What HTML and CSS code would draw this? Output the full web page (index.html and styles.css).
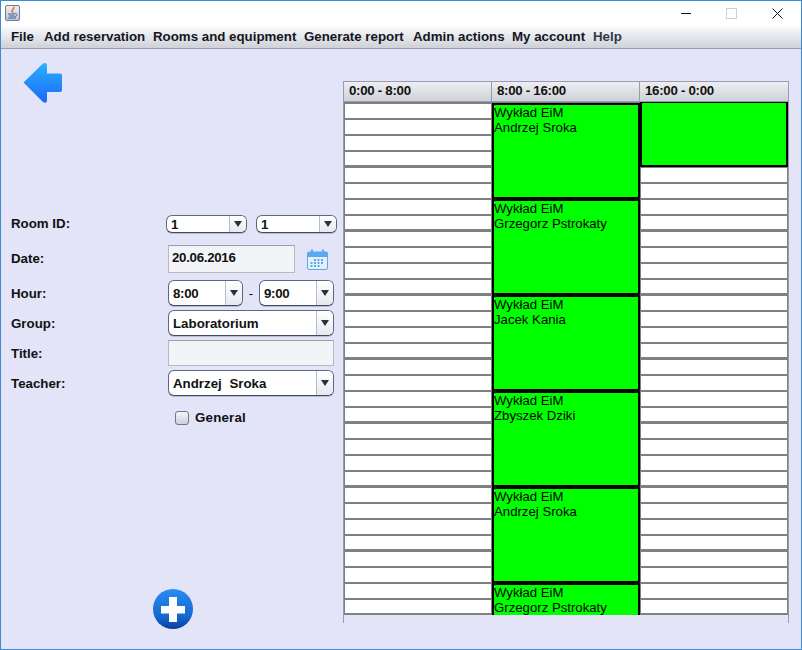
FILE: index.html
```html
<!DOCTYPE html>
<html lang="en">
<head>
    <meta charset="UTF-8">
    <title>Add reservation</title>
    <link rel="stylesheet" href="styles.css">
</head>
<body>

<div class="window">
    <header class="titlebar">
        <svg class="app-icon" width="15" height="16" viewBox="0 0 15 16">
            <defs>
                <linearGradient id="iconBg" x1="0" y1="0" x2="0" y2="1">
                    <stop offset="0" stop-color="#eef1f6"/>
                    <stop offset="1" stop-color="#b9c4d6"/>
                </linearGradient>
            </defs>
            <rect x="0.500" y="0.500" width="14" height="15" rx="1.500" fill="url(#iconBg)" stroke="#6f7c92"/>
            <path d="M9 1.500C10.500 4 6.500 4.500 8 8C4.500 6 8 4.500 9 1.500Z" fill="#e8651c" stroke="#e8651c" stroke-width="0.500"/>
            <path d="M3 9H10M4 11H9.500M3 13H11" stroke="#3f668f" stroke-width="1.200" fill="none"/>
            <path d="M10 8.500C13 8.500 12.500 11.500 9.500 11.500" stroke="#3f668f" stroke-width="0.900" fill="none"/>
        </svg>
        <div class="win-controls">
            <svg width="10" height="11" viewBox="0 0 10 11"><path d="M0 5.500H10" stroke="#111" stroke-width="1"/></svg>
            <svg width="11" height="11" viewBox="0 0 11 11"><rect x="0.500" y="0.500" width="10" height="10" fill="none" stroke="#cfcfcf"/></svg>
            <svg width="11" height="11" viewBox="0 0 11 11"><path d="M0.500 0.500L10.500 10.500M10.500 0.500L0.500 10.500" stroke="#111" stroke-width="1"/></svg>
        </div>
    </header>

    <nav class="menubar">
        <span>File</span>
        <span>Add reservation</span>
        <span>Rooms and equipment</span>
        <span>Generate report</span>
        <span>Admin actions</span>
        <span>My account</span>
        <span class="muted">Help</span>
    </nav>

    <main class="content">
        <section class="side">
            <svg class="back-icon" width="40" height="42" viewBox="0 0 40 42">
                <defs>
                    <linearGradient id="backFill" x1="0" y1="0" x2="0" y2="1">
                        <stop offset="0" stop-color="#2bb0ff"/>
                        <stop offset="1" stop-color="#1a68f5"/>
                    </linearGradient>
                </defs>
                <path d="M0.500 20.500L20 1.500Q23.500 0 24 3V11.500H37Q39 11.500 39 13.500V28Q39 30 37 30H24V38.500Q23.500 42 20 40Z" fill="url(#backFill)"/>
            </svg>

            <form class="form">
                <div class="row row-room">
                    <label>Room ID:</label>
                    <div class="combo combo-small"><span>1</span><i></i></div>
                    <div class="combo combo-small"><span>1</span><i></i></div>
                </div>
                <div class="row row-date">
                    <label>Date:</label>
                    <div class="field field-date num">20.06.2016</div>
                    <svg class="cal-icon" width="21" height="21" viewBox="0 0 21 21">
                        <rect x="0.500" y="3" width="20" height="17.500" rx="1.500" fill="#e4f1fd" stroke="#5aa9ee"/>
                        <rect x="0.500" y="3" width="20" height="5" fill="#5aa9ee"/>
                        <path d="M5 0.500V5M16 0.500V5" stroke="#5aa9ee" stroke-width="2"/>
                        <path d="M7 10h2v2H7zM10.500 10h2v2h-2zM14 10h2v2h-2zM3.500 13h2v2h-2zM7 13h2v2H7zM10.500 13h2v2h-2zM14 13h2v2h-2zM3.500 16h2v2h-2zM7 16h2v2H7zM10.500 16h2v2h-2z" fill="#5aa9ee"/>
                    </svg>
                </div>
                <div class="row row-hour">
                    <label>Hour:</label>
                    <div class="combo combo-hour num"><span>8:00</span><i></i></div>
                    <b class="dash">-</b>
                    <div class="combo combo-hour num"><span>9:00</span><i></i></div>
                </div>
                <div class="row">
                    <label>Group:</label>
                    <div class="combo combo-wide"><span>Laboratorium</span><i></i></div>
                </div>
                <div class="row">
                    <label>Title:</label>
                    <div class="field field-wide"></div>
                </div>
                <div class="row">
                    <label>Teacher:</label>
                    <div class="combo combo-wide"><span>Andrzej Sroka</span><i></i></div>
                </div>
                <div class="row row-check">
                    <div class="check"></div>
                    <label>General</label>
                </div>
            </form>

            <svg class="add-icon" width="40" height="40" viewBox="0 0 40 40">
                <defs>
                    <linearGradient id="addFill" x1="0" y1="0" x2="0" y2="1">
                        <stop offset="0" stop-color="#2a8cf0"/>
                        <stop offset="0.7" stop-color="#1468d0"/>
                        <stop offset="1" stop-color="#0c3c96"/>
                    </linearGradient>
                </defs>
                <circle cx="20" cy="20" r="20" fill="url(#addFill)"/>
                <path d="M16 8H24V17H32V24.500H24V33H16V24.500H8V17H16Z" fill="#fff"/>
            </svg>
        </section>

        <section class="schedule">
            <div class="sched-head num">
                <div>0:00 - 8:00</div>
                <div>8:00 - 16:00</div>
                <div>16:00 - 0:00</div>
            </div>
            <div class="sched-body">
                <div class="day"></div>
                <div class="day day-busy">
                    <div class="card">Wykład EiM<br>Andrzej Sroka</div>
                    <div class="card">Wykład EiM<br>Grzegorz Pstrokaty</div>
                    <div class="card">Wykład EiM<br>Jacek Kania</div>
                    <div class="card">Wykład EiM<br>Zbyszek Dziki</div>
                    <div class="card">Wykład EiM<br>Andrzej Sroka</div>
                    <div class="card">Wykład EiM<br>Grzegorz Pstrokaty</div>
                </div>
                <div class="day">
                    <div class="card card-over"></div>
                </div>
            </div>
        </section>
    </main>
</div>

</body>
</html>
```

FILE: styles.css
```css
* {
    box-sizing: border-box;
}
body {
    margin: 0;
    font-family: "Liberation Sans", Arial, sans-serif;
    font-size: 13.3px;
    color: #111;
}
.window {
    width: 802px;
    height: 650px;
    display: flex;
    flex-direction: column;
    border: 1px solid #3a8ad6;
    background-color: #e3e4f8;
    overflow: hidden;
}
.titlebar {
    height: 25px;
    flex: none;
    display: flex;
    align-items: flex-start;
    justify-content: space-between;
    padding: 4px 0 0 4px;
    background-color: white;
}
.win-controls {
    display: flex;
    align-items: center;
    gap: 35px;
    padding: 3px 18px 0 0;
}
.menubar {
    height: 23px;
    flex: none;
    display: grid;
    grid-template-columns: 33px 109px 151px 109px 99px 81px auto;
    align-items: center;
    padding: 0 0 1px 10px;
    font-weight: bold;
    color: #14161f;
    background: linear-gradient(#fbfbfc, #cfd1d8);
    border-bottom: 1px solid #9b9da9;
}
.menubar .muted {
    color: #33374a;
}
.num {
    letter-spacing: -0.3px;
}
.content {
    flex: 1;
    display: flex;
    min-height: 0;
}
.side {
    width: 342px;
    flex: none;
    display: flex;
    flex-direction: column;
    align-items: flex-start;
    padding-bottom: 20px;
}
.back-icon {
    margin: 13px 0 0 22px;
    flex: none;
}
.form {
    width: 100%;
    margin-top: 111px;
    display: flex;
    flex-direction: column;
    gap: 4px;
}
.row {
    display: flex;
    align-items: center;
    padding-left: 10px;
    font-weight: bold;
}
.row > label:first-child {
    width: 157px;
    flex: none;
}
.row-room {
    gap: 9px;
}
.row-room > label:first-child {
    width: 146px;
    padding-bottom: 2px;
}
.row-date {
    margin-top: 8px;
}
.row-date > label:first-child {
    padding-bottom: 2px;
}
.row-hour {
    margin-top: 3px;
}
.row-check {
    margin-top: 10px;
    padding-left: 174px;
}
.row-check > label:last-child {
    letter-spacing: 0.2px;
}
.combo {
    height: 26px;
    display: flex;
    align-items: center;
    background-color: white;
    border: 1px solid #5b6880;
    border-bottom-color: #3e4a60;
    border-radius: 6px;
    box-shadow: 0 1px 0 #b9bccd;
    overflow: hidden;
    word-spacing: 4px;
}
.combo span {
    flex: 1;
    padding-left: 4px;
}
.combo i {
    width: 17px;
    height: 100%;
    flex: none;
    border-left: 1px solid #b4bcc9;
    background: linear-gradient(#fff, #e6e9ef);
    position: relative;
}
.combo i::after {
    content: "";
    position: absolute;
    left: 4px;
    top: 50%;
    margin-top: -3px;
    border-left: 4px solid transparent;
    border-right: 4px solid transparent;
    border-top: 6px solid #2c3038;
}
.combo-small {
    width: 81px;
    height: 18px;
}
.combo-hour {
    width: 75px;
}
.combo-wide {
    width: 166px;
}
.dash {
    width: 16px;
    text-align: center;
    font-weight: normal;
}
.field {
    height: 28px;
    padding: 0 3px;
    line-height: 24px;
    background-color: #f3f4f8;
    border: 1px solid #b7b8c0;
    border-top-color: #9c9da6;
}
.field-date {
    width: 127px;
}
.field-wide {
    width: 166px;
    height: 26px;
}
.cal-icon {
    margin-left: 12px;
}
.check {
    width: 14px;
    height: 14px;
    margin-right: 6px;
    border: 1px solid #6f7688;
    border-radius: 3px;
    background: linear-gradient(#f5f6f8, #ccd0da);
}
.add-icon {
    margin: auto 0 0 152px;
    flex: none;
}
.schedule {
    width: 446px;
    height: 542px;
    flex: none;
    margin-top: 32px;
    border-left: 1px solid #9a9bb0;
    border-right: 1px solid #9a9bb0;
}
.sched-head {
    height: 21px;
    display: grid;
    grid-template-columns: repeat(3, 148px);
    border-top: 1px solid #9a9bb0;
    border-bottom: 1px solid #9a9bb0;
    background: linear-gradient(#eeeff3, #cfd1d9);
    font-weight: bold;
    line-height: 18px;
}
.sched-head div {
    padding-left: 5px;
    border-right: 1px solid #9a9bb0;
}
.sched-head div:last-child {
    border-right: none;
}
.sched-body {
    height: 513px;
    display: grid;
    grid-template-columns: repeat(3, 148px);
    overflow: hidden;
}
.day {
    position: relative;
    border-left: 1px solid #808080;
    border-right: 1px solid #808080;
    background-image: linear-gradient(#808080 3px, white 3px, white 17px, #808080 17px, #808080 19px,
        white 19px, white 33px, #808080 33px, #808080 35px, white 35px, white 49px, #808080 49px,
        #808080 51px, white 51px);
    background-size: 100% 64px;
    background-position: 0 -1px;
}
.day-busy {
    border: none;
    padding-top: 1px;
}
.card {
    height: 96px;
    border: 2px solid black;
    background-color: #00ff00;
    line-height: 15px;
    font-size: 13.2px;
    color: black;
}
.card-over {
    position: absolute;
    top: -1px;
    left: -1px;
    right: -1px;
    height: 66px;
}
```
